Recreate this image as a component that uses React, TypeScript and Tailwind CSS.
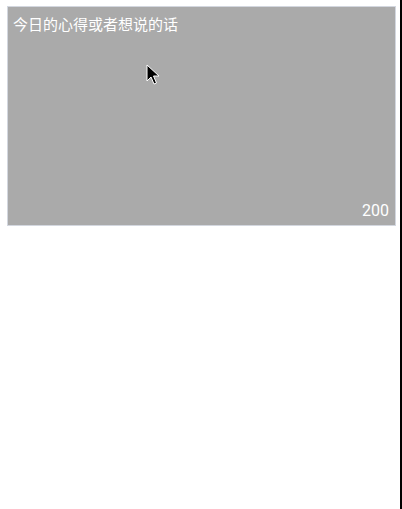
import React from "react";

const Cursor: React.FC = () => (
  <svg
    className="absolute left-[138px] top-[57px]"
    width="14"
    height="22"
    viewBox="0 0 14 22"
  >
    <path
      d="M1 1 L1 17 L5 13 L8 20 L10.5 19 L7.5 12 L13 12 Z"
      fill="#000"
      stroke="#fff"
      strokeWidth="1"
      strokeLinejoin="round"
    />
  </svg>
);

const App: React.FC = () => {
  return (
    <div
      className="min-h-[509px] w-[402px] border-r-2 border-black bg-white pt-[6px] pl-[7px]"
      style={{ fontFamily: '"Noto Sans", "Noto Sans CJK SC", sans-serif' }}
    >
      <div className="relative h-[220px] w-[389px] border border-[#d3d7df] bg-[#aaaaaa]">
        <p className="pl-[5px] pt-[7px] text-[15px] leading-[20px] text-white">
          今日的心得或者想说的话
        </p>
        <span className="absolute bottom-[4px] right-[6px] font-['Roboto',sans-serif] text-[16px] leading-[20px] text-white">
          200
        </span>
        <Cursor />
      </div>
    </div>
  );
};

export default App;
